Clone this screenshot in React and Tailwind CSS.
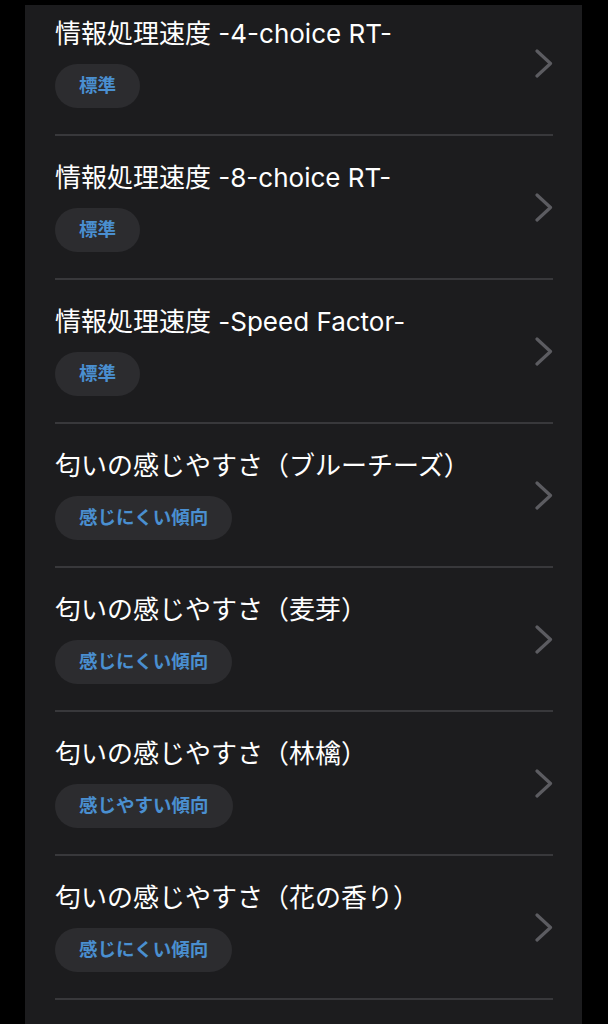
import React from "react";

const items = [
  { title: "情報処理速度 -4-choice RT-", tag: "標準" },
  { title: "情報処理速度 -8-choice RT-", tag: "標準" },
  { title: "情報処理速度 -Speed Factor-", tag: "標準" },
  { title: "匂いの感じやすさ（ブルーチーズ）", tag: "感じにくい傾向" },
  { title: "匂いの感じやすさ（麦芽）", tag: "感じにくい傾向" },
  { title: "匂いの感じやすさ（林檎）", tag: "感じやすい傾向" },
  { title: "匂いの感じやすさ（花の香り）", tag: "感じにくい傾向" },
];

function Chevron() {
  return (
    <svg width="18" height="29" viewBox="0 0 18 29" fill="none" className="shrink-0">
      <path d="M2 2 L15.5 14.5 L2 27" stroke="#5c5c61" strokeWidth="3.2" strokeLinecap="round" strokeLinejoin="round" />
    </svg>
  );
}

function Row({ title, tag }) {
  return (
    <div className="h-[144px] flex border-b-2 border-[#38383b]">
      <div className="flex-1 flex flex-col items-start pt-[27px]">
        <div className="text-[26px] leading-[30px] text-white whitespace-nowrap">{title}</div>
        <span className="mt-[15px] h-[44px] px-[24px] rounded-full bg-[#2c2c2f] flex items-center text-[18.5px] font-bold text-[#4a8fd0]">
          {tag}
        </span>
      </div>
      <div className="self-center">
        <Chevron />
      </div>
    </div>
  );
}

export default function App() {
  return (
    <div
      className="w-[608px] h-[1024px] bg-black overflow-hidden pt-[5px]"
      style={{ fontFamily: '"Inter", "Noto Sans CJK JP", sans-serif' }}
    >
      <div className="ml-[25px] w-[557px] h-[1019px] bg-[#1c1c1e] overflow-hidden">
        <div className="-mt-[13px] pl-[30px] pr-[29px]">
          {items.map((it) => (
            <Row key={it.title} {...it} />
          ))}
        </div>
      </div>
    </div>
  );
}
